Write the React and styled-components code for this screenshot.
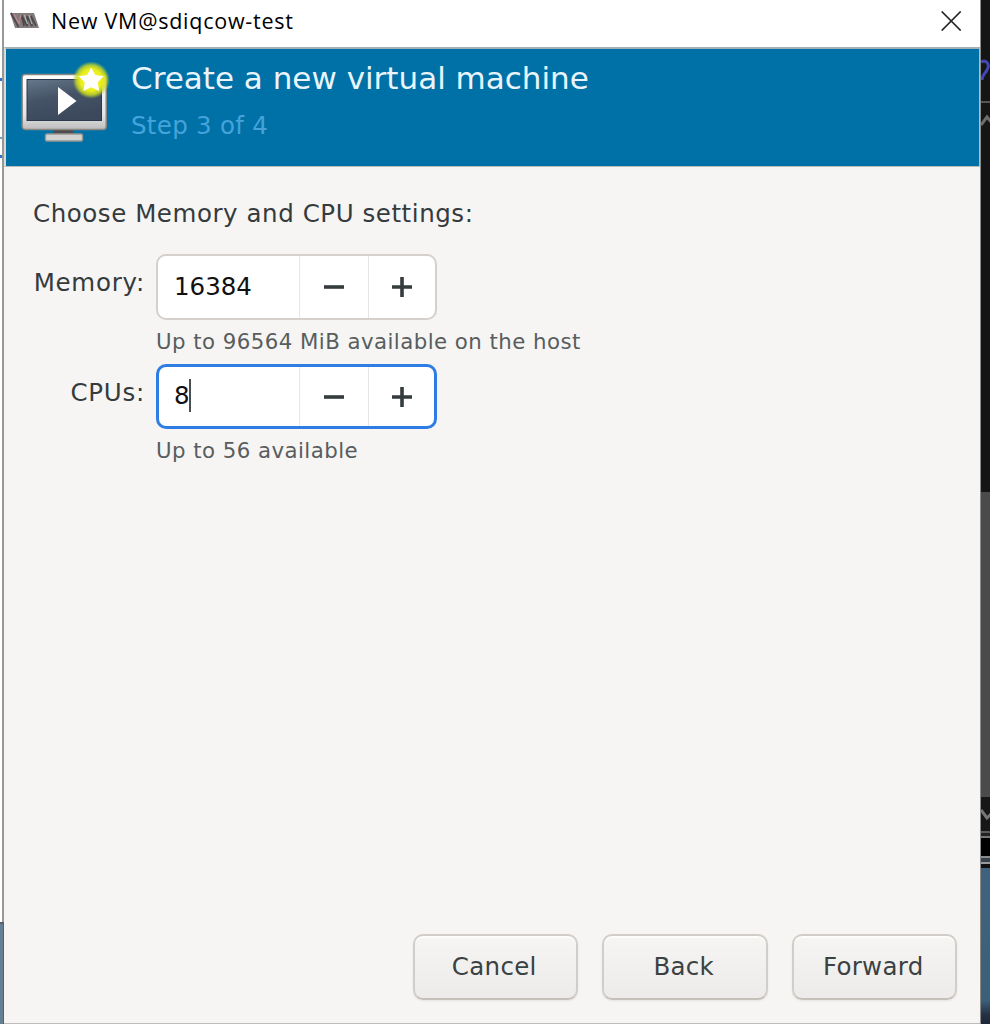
import React from "react";
import styled, { createGlobalStyle } from "styled-components";

const GlobalStyle = createGlobalStyle`
  * {
    box-sizing: border-box;
  }
  body {
    margin: 0;
    overflow: hidden;
    background: #151515;
    font-family: "DejaVu Sans", sans-serif;
    color: #353b3d;
  }
`;

const Desktop = styled.div`
  display: grid;
  grid-template-columns: 4px 977px 9px;
  width: 990px;
  height: 1024px;
`;

const Edge = styled.div`
  display: flex;
  flex-direction: column;
  overflow: hidden;
`;

const Slice = styled.div`
  flex: none;
  height: ${(props) => props.$h}px;
  background: ${(props) => props.$bg};
  svg {
    display: block;
  }
`;

const Window = styled.main`
  display: flex;
  flex-direction: column;
  height: 1024px;
  background: #f6f5f4;
  border-right: 1px solid #8b8b89;
  border-bottom: 1px solid #bdbbbb;
`;

const TitleBar = styled.header`
  display: flex;
  align-items: center;
  height: 47px;
  padding: 0 18px 5px 6px;
  background: #fff;
`;

const Title = styled.h1`
  flex: 1;
  margin: 0 0 0 11px;
  font: 400 21.5px/30px "Open Sans", "Noto Sans", sans-serif;
  letter-spacing: 0.75px;
  color: #000;
`;

const CloseButton = styled.button`
  display: flex;
  padding: 0;
  border: 0;
  background: none;
`;

const Banner = styled.section`
  display: flex;
  height: 120px;
  padding: 13px 15px 0;
  border: 1px solid #b9bcba;
  border-top: 2px solid #a3b0b4;
  border-left: 2px solid #dcdad6;
  background: #0071a7;
`;

const BannerText = styled.div`
  margin: -2px 0 0 20px;
`;

const Heading = styled.h2`
  margin: 0;
  font-size: 31px;
  font-weight: 400;
  line-height: 36px;
  color: #e9f5fb;
`;

const Step = styled.p`
  margin: 15px 0 0;
  font-size: 24.5px;
  line-height: 30px;
  letter-spacing: 0.3px;
  color: #45a3db;
`;

const Content = styled.section`
  flex: 1;
  padding: 32px 29px 0;
`;

const Intro = styled.p`
  margin: 0 0 25px;
  font-size: 24.5px;
  line-height: 30px;
  letter-spacing: 0.56px;
`;

const Fields = styled.div`
  display: grid;
  grid-template-columns: 112px 425px;
  column-gap: 11px;
`;

const Label = styled.label`
  padding-top: 14px;
  font-size: 24.5px;
  line-height: 30px;
  letter-spacing: 0.75px;
  text-align: right;
  white-space: nowrap;
`;

const Hint = styled.p`
  grid-column: 2;
  height: 44px;
  margin: 0;
  padding-top: 8px;
  font-size: 21.3px;
  line-height: 28px;
  letter-spacing: 0.45px;
  white-space: nowrap;
  color: #585d5e;
`;

const Spinner = styled.div`
  display: grid;
  grid-template-columns: 1fr 69px ${(props) => (props.$focused ? 66 : 67)}px;
  width: 281px;
  height: ${(props) => (props.$focused ? 65 : 66)}px;
  border: ${(props) => (props.$focused ? "3px solid #2d7de4" : "2px solid #d5d0cb")};
  border-radius: 10px;
  background: #fff;
`;

const Value = styled.div`
  display: flex;
  align-items: center;
  padding: 0 0 2px ${(props) => (props.$focused ? 15 : 16)}px;
  font-size: 24.5px;
  color: #111;
`;

const Caret = styled.span`
  width: 2px;
  height: 33px;
  margin-left: -1px;
  background: #4a5052;
`;

const SpinButton = styled.button`
  display: flex;
  align-items: center;
  justify-content: center;
  padding: 0;
  border: 0;
  border-left: 1px solid #e8e6e4;
  background: none;
`;

const Actions = styled.footer`
  display: flex;
  justify-content: flex-end;
  gap: 24px;
  padding: 0 23px 23px 0;
`;

const Button = styled.button`
  width: 165.5px;
  height: 66px;
  padding: 0 2px 2px 0;
  border: 2px solid #d2cdc8;
  border-bottom-color: #c6c0bb;
  border-radius: 10px;
  background: linear-gradient(#f6f5f3, #edebe9);
  box-shadow: inset 0 2px #fcfcfb, 0 1px 2px rgba(0, 0, 0, 0.08);
  font: 24.5px "DejaVu Sans", sans-serif;
  letter-spacing: 0.3px;
  color: #3a4143;
`;

function AppLogo() {
  return (
    <svg width="30" height="18" viewBox="0 0 30 18">
      <path d="M0 1H24L29 16H5Z" fill="#817c7b" />
      <path d="M1 1L8 14L12 3M14 14L12 4L17 14L17 4L22 14L21 4L26 14" fill="none" stroke="#4b484a" strokeWidth="1.7" />
      <path d="M4 2L9 12L11 3" fill="none" stroke="#b98690" strokeWidth="1.5" />
      <path d="M14.5 3L17.5 12M19 3L22 12" stroke="#b4b1af" strokeWidth="1.2" />
    </svg>
  );
}

function MonitorIcon() {
  return (
    <svg width="90" height="84" viewBox="0 0 90 84">
      <defs>
        <linearGradient id="frame" x2="0" y2="1">
          <stop offset="0" stopColor="#fff" />
          <stop offset=".75" stopColor="#e3e3e3" />
          <stop offset="1" stopColor="#bcbcbc" />
        </linearGradient>
        <linearGradient id="screen" x2=".35" y2="1">
          <stop offset="0" stopColor="#66788c" />
          <stop offset=".5" stopColor="#455366" />
          <stop offset="1" stopColor="#3c495d" />
        </linearGradient>
        <radialGradient id="glow">
          <stop offset="0" stopColor="#fffb52" />
          <stop offset=".6" stopColor="#e7ec18" />
          <stop offset=".8" stopColor="#cddc24" stopOpacity=".8" />
          <stop offset="1" stopColor="#9fc43a" stopOpacity="0" />
        </radialGradient>
      </defs>
      <path d="M33 67H52V73H33Z" fill="#4c4c4c" />
      <rect x="24.5" y="72" width="37" height="7" rx="1.5" fill="#d3d3d2" stroke="#969693" strokeWidth="1.4" />
      <rect x="1.2" y="12.5" width="84" height="55" rx="3" fill="url(#frame)" stroke="#8a8883" strokeWidth="1.4" />
      <rect x="6" y="17.5" width="74.5" height="41" fill="url(#screen)" stroke="#2c394c" strokeWidth="1" />
      <path d="M37 25L55.5 39L37 53Z" fill="#fff" />
      <circle cx="70.2" cy="18" r="18.8" fill="url(#glow)" />
      <path
        d="M70.2 5.5L74.2 13L82.7 14.3L76.7 20.3L78.2 29L70.2 25.2L62.4 29L63.7 20.3L57.7 14.3L66.2 13Z"
        fill="#fff"
      />
    </svg>
  );
}

function CloseIcon() {
  return (
    <svg width="21" height="20" viewBox="0 0 21 20">
      <path d="M.7 .5L19.7 19.5M19.7 .5L.7 19.5" stroke="#262626" strokeWidth="1.7" />
    </svg>
  );
}

function SignIcon({ plus }) {
  return (
    <svg width="20" height="20" viewBox="0 0 20 20">
      <path d={plus ? "M0 10H20M10 0V20" : "M0 10H20"} stroke="#353c3e" strokeWidth="3.6" />
    </svg>
  );
}

function NumberField({ label, value, hint, focused }) {
  return (
    <>
      <Label>{label}</Label>
      <Spinner $focused={focused}>
        <Value $focused={focused}>
          {value}
          {focused && <Caret />}
        </Value>
        <SpinButton aria-label="Decrease">
          <SignIcon />
        </SpinButton>
        <SpinButton aria-label="Increase">
          <SignIcon plus />
        </SpinButton>
      </Spinner>
      <Hint>{hint}</Hint>
    </>
  );
}

const edgeLight = "linear-gradient(90deg, #fff 2px, #989896 2px)";

function LeftEdge() {
  return (
    <Edge>
      <Slice $h={78} $bg={edgeLight} />
      <Slice $h={3} $bg="linear-gradient(90deg, #2f6fd8 2px, #989896 2px)" />
      <Slice $h={56} $bg={edgeLight} />
      <Slice $h={2} $bg="linear-gradient(90deg, #68a8bf 2px, #989896 2px)" />
      <Slice $h={16} $bg={edgeLight} />
      <Slice $h={3} $bg="linear-gradient(90deg, #2f6fd8 2px, #989896 2px)" />
      <Slice $h={764} $bg={edgeLight} />
      <Slice $h={2} $bg="#56616b" />
      <Slice $h={100} $bg="linear-gradient(90deg, #667f92 3px, #52616e 3px)" />
    </Edge>
  );
}

function RightEdge() {
  return (
    <Edge>
      <Slice $h={101} $bg="#151515">
        <svg width="9" height="101">
          <path d="M0 62C6 59 9 65 6 70C4 74 1 75 1 80" fill="none" stroke="#4048b8" strokeWidth="3" />
        </svg>
      </Slice>
      <Slice $h={2} $bg="#555" />
      <Slice $h={389} $bg="#151515">
        <svg width="9" height="30">
          <path d="M0 22L6 14L11 20" fill="none" stroke="#6c6c6c" strokeWidth="3" />
        </svg>
      </Slice>
      <Slice $h={305} $bg="#4b4b4b" />
      <Slice $h={34} $bg="#171717">
        <svg width="9" height="30">
          <path d="M0 13L6 21L11 16" fill="none" stroke="#777" strokeWidth="3" />
        </svg>
      </Slice>
      <Slice $h={2} $bg="#5c5c5c" />
      <Slice $h={3} $bg="#222" />
      <Slice $h={2} $bg="#777" />
      <Slice $h={18} $bg="#000" />
      <Slice $h={2} $bg="#8a8a8a" />
      <Slice $h={4} $bg="#33424b" />
      <Slice $h={2} $bg="#999" />
      <Slice $h={4} $bg="#111" />
      <Slice $h={156} $bg="linear-gradient(#41627e, #3c6079 85%, #253044 94%, #1d2636)" />
    </Edge>
  );
}

export default function App() {
  return (
    <>
      <GlobalStyle />
      <Desktop>
        <LeftEdge />
        <Window>
          <TitleBar>
            <AppLogo />
            <Title>New VM@sdiqcow-test</Title>
            <CloseButton aria-label="Close">
              <CloseIcon />
            </CloseButton>
          </TitleBar>
          <Banner>
            <MonitorIcon />
            <BannerText>
              <Heading>Create a new virtual machine</Heading>
              <Step>Step 3 of 4</Step>
            </BannerText>
          </Banner>
          <Content>
            <Intro>Choose Memory and CPU settings:</Intro>
            <Fields>
              <NumberField label="Memory:" value="16384" hint="Up to 96564 MiB available on the host" />
              <NumberField label="CPUs:" value="8" hint="Up to 56 available" focused />
            </Fields>
          </Content>
          <Actions>
            <Button>Cancel</Button>
            <Button>Back</Button>
            <Button>Forward</Button>
          </Actions>
        </Window>
        <RightEdge />
      </Desktop>
    </>
  );
}
